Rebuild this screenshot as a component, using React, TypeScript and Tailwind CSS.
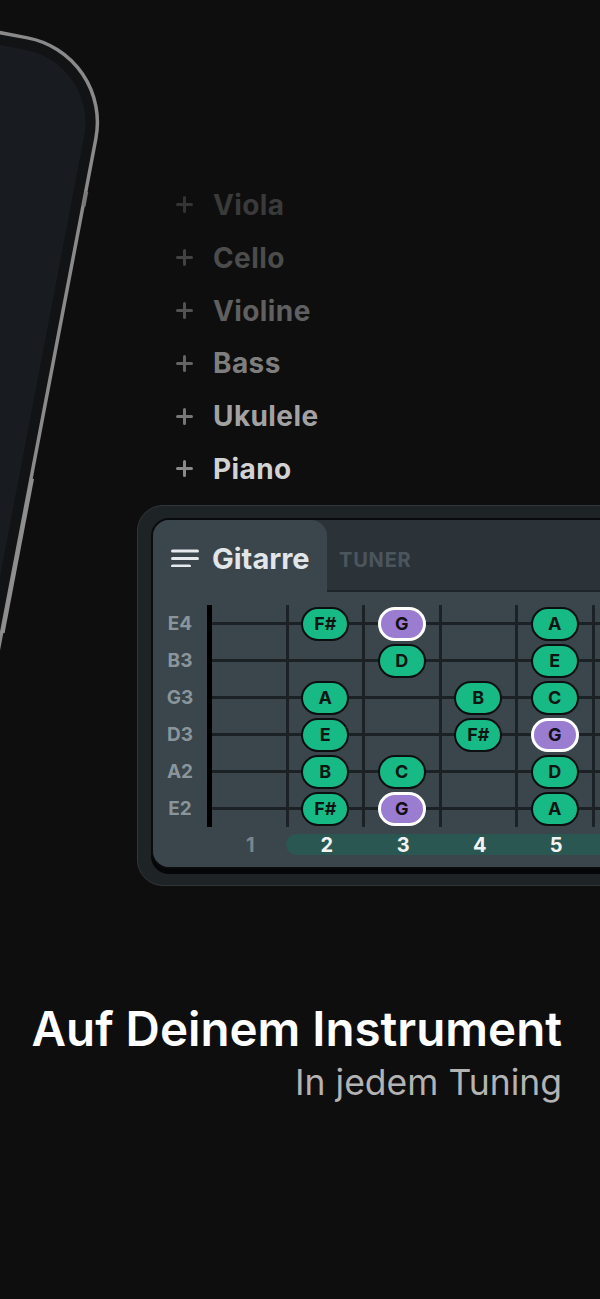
import React from "react";

const items = [
  { name: "Viola", text: "#3a3a3a", plus: "#343434" },
  { name: "Cello", text: "#4c4c4c", plus: "#424242" },
  { name: "Violine", text: "#606060", plus: "#525252" },
  { name: "Bass", text: "#7e7e7e", plus: "#646464" },
  { name: "Ukulele", text: "#a2a2a2", plus: "#777777" },
  { name: "Piano", text: "#d2d2d2", plus: "#8a8a8a" },
];

type Note = { n: string; p?: boolean } | null;
const strings: { label: string; notes: Note[] }[] = [
  { label: "E4", notes: [null, { n: "F#" }, { n: "G", p: true }, null, { n: "A" }] },
  { label: "B3", notes: [null, null, { n: "D" }, null, { n: "E" }] },
  { label: "G3", notes: [null, { n: "A" }, null, { n: "B" }, { n: "C" }] },
  { label: "D3", notes: [null, { n: "E" }, null, { n: "F#" }, { n: "G", p: true }] },
  { label: "A2", notes: [null, { n: "B" }, { n: "C" }, null, { n: "D" }] },
  { label: "E2", notes: [null, { n: "F#" }, { n: "G", p: true }, null, { n: "A" }] },
];

function Plus({ color }: { color: string }) {
  return (
    <svg width="17" height="17" viewBox="0 0 17 17">
      <path d="M8.5 1.5v14M1.5 8.5h14" stroke={color} strokeWidth="3" strokeLinecap="round" />
    </svg>
  );
}

function Phone() {
  return (
    <svg className="absolute left-0 top-0" width="200" height="720" viewBox="0 0 200 720">
      <g transform="translate(112,54) rotate(10.8)">
        <rect x="-500" y="0" width="500" height="1100" rx="86" fill="#121315" stroke="#8a8a8a" strokeWidth="3.5" />
        <rect x="-488" y="12" width="476" height="1076" rx="74" fill="#181b1f" />
        <rect x="-1" y="140" width="3.5" height="15" fill="#7a7a7a" />
        <rect x="-1" y="432" width="4" height="157" fill="#8f8f8f" />
      </g>
    </svg>
  );
}

function Pill({ note }: { note: { n: string; p?: boolean } }) {
  return note.p ? (
    <div className="flex h-[34px] w-[48px] items-center justify-center rounded-full border-[3px] border-white bg-[#9a7cd0] text-[18px] font-bold text-[#141018]">
      {note.n}
    </div>
  ) : (
    <div className="flex h-[34px] w-[48px] items-center justify-center rounded-full border-2 border-[#0c0f10] bg-[#17b984] text-[18px] font-bold text-[#0d1512]">
      {note.n}
    </div>
  );
}

export default function App() {
  return (
    <div
      className="relative h-[1299px] w-[600px] overflow-hidden bg-[#0e0e0f]"
      style={{ fontFamily: "Inter, 'Noto Sans', sans-serif" }}
    >
      <Phone />
      <div className="relative pt-[178.6px]">
        {items.map((it) => (
          <div key={it.name} className="flex h-[52.8px] items-center gap-[20px] pl-[176px]">
            <Plus color={it.plus} />
            <span className="text-[28px] font-bold leading-none tracking-[0.4px]" style={{ color: it.text }}>
              {it.name}
            </span>
          </div>
        ))}

        <div className="ml-[137px] mt-[10px] w-[520px] rounded-[26px] border border-[#30373b] bg-[#1e2326] pb-[16px] pl-[13px] pt-[12px]">
          <div className="rounded-[18px] border-2 border-[#090b0c] bg-[#2c3338] shadow-[0_5px_0_0_#050607]">
            <div className="flex items-end">
              <div className="flex h-[72px] w-[174px] items-center gap-[13px] rounded-t-[16px] bg-[#3a454c] pl-[18px] pt-[4px]">
                <svg width="28" height="18" viewBox="0 0 28 18">
                  <path d="M1.5 2h25M1.5 9.5h25M1.5 17h17" stroke="#e6eaec" strokeWidth="3" strokeLinecap="round" />
                </svg>
                <span className="text-[29px] font-bold leading-none text-[#e2e6e8]">Gitarre</span>
              </div>
              <div className="flex h-[64px] flex-1 items-center border-b-2 border-[#1e2428] pl-[12px] pt-[2px]">
                <span className="text-[20px] font-bold leading-none tracking-[0.8px] text-[#4b565c]">TUNER</span>
              </div>
            </div>
            <div className="rounded-b-[16px] bg-[#3a454c] pb-[12px] pt-[13px]">
              <div className="flex">
                <div className="flex w-[54px] flex-col">
                  {strings.map((s) => (
                    <div key={s.label} className="flex h-[37px] items-center justify-center text-[19px] font-bold text-[#8a959b]">
                      {s.label}
                    </div>
                  ))}
                </div>
                <div className="w-[5px] bg-black" />
                <div className="flex flex-col">
                  {strings.map((s) => (
                    <div key={s.label} className="flex h-[37px]">
                      {s.notes.map((note, i) => (
                        <div
                          key={i}
                          className="flex w-[76.5px] items-center justify-center border-r-[3px] border-[#1b2125] bg-[linear-gradient(to_bottom,transparent_17px,#1b2125_17px,#1b2125_20px,transparent_20px)]"
                        >
                          {note && <Pill note={note} />}
                        </div>
                      ))}
                      <div className="w-[40px] bg-[linear-gradient(to_bottom,transparent_17px,#1b2125_17px,#1b2125_20px,transparent_20px)]" />
                    </div>
                  ))}
                </div>
              </div>
              <div className="mt-[7px] flex h-[21px] items-center">
                <div className="w-[59px]" />
                <div className="flex w-[76.5px] justify-center text-[20px] font-bold text-[#7b868c]">1</div>
                <div className="-ml-[3px] flex h-[21px] flex-1 items-center rounded-l-full bg-[#2b5752] pl-[3px]">
                  {["2", "3", "4", "5"].map((n) => (
                    <div key={n} className="flex w-[76.5px] justify-center text-[20px] font-bold text-[#f2f4f4]">
                      {n}
                    </div>
                  ))}
                </div>
              </div>
            </div>
          </div>
        </div>

        <div className="mt-[116px] flex flex-col items-end pr-[38px]">
          <div className="text-[47.5px] font-semibold leading-[54px] text-white">Auf Deinem Instrument</div>
          <div className="mt-[6px] text-[35.5px] font-normal leading-[42px] text-[#b3b3b3]">In jedem Tuning</div>
        </div>
      </div>
    </div>
  );
}
